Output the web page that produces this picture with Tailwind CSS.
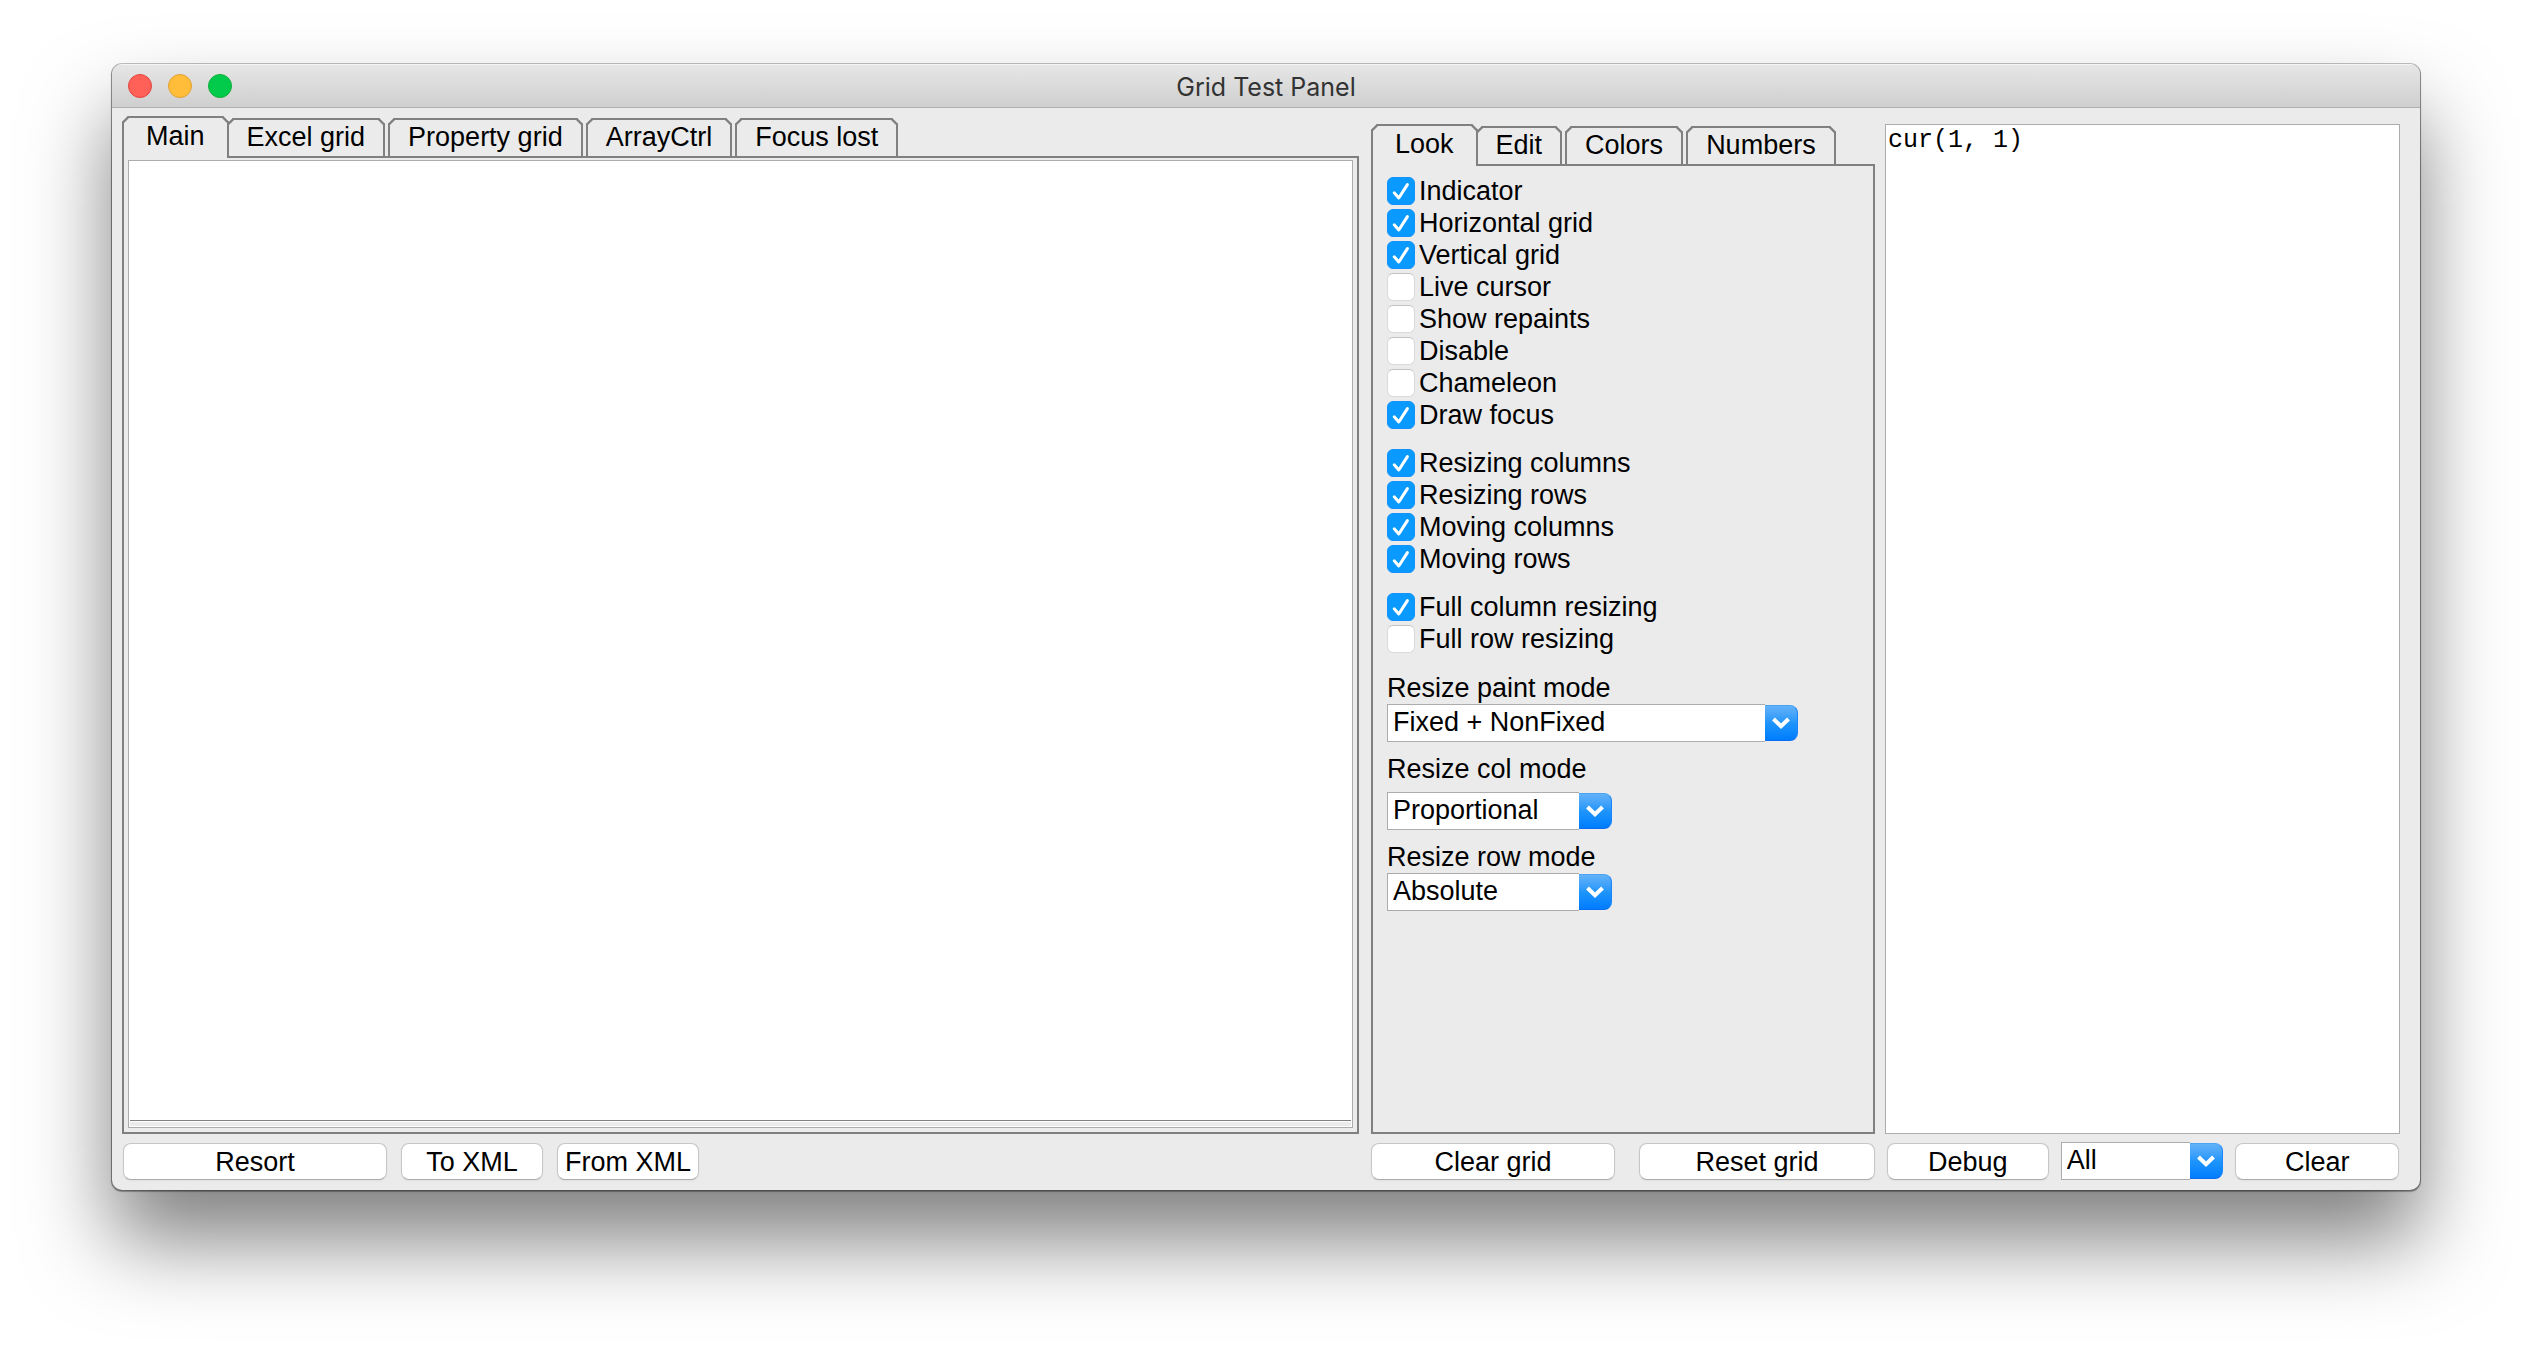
<!DOCTYPE html>
<html lang="en">
<head>
    <meta charset="UTF-8">
    <meta name="viewport" content="width=device-width, initial-scale=1.0">
    <title>Grid Test Panel</title>
    <script src="https://cdn.jsdelivr.net/npm/@tailwindcss/browser@4"></script>
</head>
<body class="flex min-h-screen flex-col bg-white px-28 pt-16 pb-40 font-['Liberation_Sans',Arial,sans-serif] text-[27px] leading-8 text-black">

    <!-- WINDOW -->
    <div class="flex flex-1 flex-col overflow-hidden rounded-[10px] bg-[#ebebeb] shadow-[0_0_0_1px_rgba(0,0,0,0.22),0_1px_1px_1px_rgba(0,0,0,0.3),0_50px_84px_rgba(0,0,0,0.5)]">

        <!-- Title bar -->
        <header class="grid h-11 grid-cols-[1fr_auto_1fr] items-center border-t border-b border-t-[#f4f4f4] border-b-[#b0b0b0] bg-linear-to-b from-[#e6e6e6] to-[#cfcfcf] px-4">
            <div class="flex gap-4">
                <button aria-label="Close" class="size-6 rounded-full border border-[#e2463f] bg-[#ff6058]"></button>
                <button aria-label="Minimize" class="size-6 rounded-full border border-[#e0a032] bg-[#ffbd3a]"></button>
                <button aria-label="Zoom" class="size-6 rounded-full border border-[#0fae3a] bg-[#02ca4a]"></button>
            </div>
            <h1 class="pt-0.5 font-[Inter,sans-serif] text-[25px] text-[#333]">Grid Test Panel</h1>
        </header>

        <main class="flex flex-1 pt-2 pr-5 pb-2.5 pl-2.5">

            <!-- Grid area -->
            <section class="mr-3 flex flex-[1237] flex-col">
                <div role="tablist" class="flex items-start">
                    <button role="tab" aria-selected="true" class="z-10 h-[42px] rounded-t-md border-2 border-b-0 border-[#808080] bg-[#ebebeb] px-[22px] pb-1 [corner-shape:bevel]">Main</button>
                    <div class="-ml-0.5 flex gap-[3px] pt-0.5">
                        <button role="tab" class="h-[38px] rounded-t-md border-2 border-b-0 border-[#808080] px-[18px] pb-0.5 [corner-shape:bevel]">Excel grid</button>
                        <button role="tab" class="h-[38px] rounded-t-md border-2 border-b-0 border-[#808080] px-[18px] pb-0.5 [corner-shape:bevel]">Property grid</button>
                        <button role="tab" class="h-[38px] rounded-t-md border-2 border-b-0 border-[#808080] px-[18px] pb-0.5 [corner-shape:bevel]">ArrayCtrl</button>
                        <button role="tab" class="h-[38px] rounded-t-md border-2 border-b-0 border-[#808080] px-[18px] pb-0.5 [corner-shape:bevel]">Focus lost</button>
                    </div>
                </div>
                <div role="tabpanel" class="-mt-0.5 flex flex-1 flex-col border-2 border-[#808080] px-1 pt-0.5 pb-1">
                    <div class="flex flex-1 flex-col border border-[#acacac] bg-white p-px">
                        <div class="flex-1"></div>
                        <div class="h-px bg-[#808080]"></div>
                        <div class="mt-px h-1 bg-[#ebebeb]"></div>
                    </div>
                </div>
                <div class="mt-2 flex h-[38px] gap-3.5 pl-px">
                    <button class="mt-px w-[264px] rounded-lg border border-[#c6c6c6] border-b-[#acacac] bg-white shadow-xs">Resort</button>
                    <button class="mt-px w-[142px] rounded-lg border border-[#c6c6c6] border-b-[#acacac] bg-white shadow-xs">To XML</button>
                    <button class="mt-px w-[142px] rounded-lg border border-[#c6c6c6] border-b-[#acacac] bg-white shadow-xs">From XML</button>
                </div>
            </section>

            <!-- Options -->
            <section class="mr-2.5 flex flex-[504] flex-col pt-2">
                <div role="tablist" class="flex items-start">
                    <button role="tab" aria-selected="true" class="z-10 h-[42px] rounded-t-md border-2 border-b-0 border-[#808080] bg-[#ebebeb] px-[22px] pb-1 [corner-shape:bevel]">Look</button>
                    <div class="-ml-0.5 flex gap-[3px] pt-0.5">
                        <button role="tab" class="h-[38px] rounded-t-md border-2 border-b-0 border-[#808080] px-[18px] pb-0.5 [corner-shape:bevel]">Edit</button>
                        <button role="tab" class="h-[38px] rounded-t-md border-2 border-b-0 border-[#808080] px-[18px] pb-0.5 [corner-shape:bevel]">Colors</button>
                        <button role="tab" class="h-[38px] rounded-t-md border-2 border-b-0 border-[#808080] px-[18px] pb-0.5 [corner-shape:bevel]">Numbers</button>
                    </div>
                </div>
                <div role="tabpanel" class="-mt-0.5 flex flex-1 flex-col gap-4 border-2 border-[#808080] px-3.5 pt-[9px]">
                    <div id="look-group"></div>
                    <div id="resize-group"></div>
                    <div id="full-group"></div>
                    <div class="flex flex-col gap-2.5">
                        <div>
                            <label for="paintMode" class="block h-[33px] pt-px">Resize paint mode</label>
                            <div class="grid h-[38px] w-[411px]">
                                <span class="col-start-1 row-start-1 mr-[33px] border border-r-0 border-[#acacac] bg-white"></span>
                                <span class="col-start-1 row-start-1 my-px flex w-[33px] items-center justify-center justify-self-end rounded-r-lg border border-l-0 border-t-[#4ba3f5] border-r-[#1a84fb] border-b-[#0a6df0] bg-linear-to-b from-[#62b2f8] via-[#1e95fb] to-[#007cff]">
                                    <svg class="h-3 w-[18px]" viewBox="0 0 18 12" fill="none" stroke="white" stroke-width="4"><path d="M1.5 2 9 9.2 16.5 2"/></svg>
                                </span>
                                <select id="paintMode" class="col-start-1 row-start-1 appearance-none pb-0.5 pl-1.5">
                                    <option>Fixed + NonFixed</option>
                                </select>
                            </div>
                        </div>
                        <div>
                            <label for="colMode" class="mb-[7px] block h-[33px] pt-px">Resize col mode</label>
                            <div class="grid h-[38px] w-[225px]">
                                <span class="col-start-1 row-start-1 mr-[33px] border border-r-0 border-[#acacac] bg-white"></span>
                                <span class="col-start-1 row-start-1 my-px flex w-[33px] items-center justify-center justify-self-end rounded-r-lg border border-l-0 border-t-[#4ba3f5] border-r-[#1a84fb] border-b-[#0a6df0] bg-linear-to-b from-[#62b2f8] via-[#1e95fb] to-[#007cff]">
                                    <svg class="h-3 w-[18px]" viewBox="0 0 18 12" fill="none" stroke="white" stroke-width="4"><path d="M1.5 2 9 9.2 16.5 2"/></svg>
                                </span>
                                <select id="colMode" class="col-start-1 row-start-1 appearance-none pb-0.5 pl-1.5">
                                    <option>Proportional</option>
                                </select>
                            </div>
                        </div>
                        <div>
                            <label for="rowMode" class="block h-[33px] pt-px">Resize row mode</label>
                            <div class="grid h-[38px] w-[225px]">
                                <span class="col-start-1 row-start-1 mr-[33px] border border-r-0 border-[#acacac] bg-white"></span>
                                <span class="col-start-1 row-start-1 my-px flex w-[33px] items-center justify-center justify-self-end rounded-r-lg border border-l-0 border-t-[#4ba3f5] border-r-[#1a84fb] border-b-[#0a6df0] bg-linear-to-b from-[#62b2f8] via-[#1e95fb] to-[#007cff]">
                                    <svg class="h-3 w-[18px]" viewBox="0 0 18 12" fill="none" stroke="white" stroke-width="4"><path d="M1.5 2 9 9.2 16.5 2"/></svg>
                                </span>
                                <select id="rowMode" class="col-start-1 row-start-1 appearance-none pb-0.5 pl-1.5">
                                    <option>Absolute</option>
                                </select>
                            </div>
                        </div>
                    </div>
                </div>
                <div class="mt-2 flex h-[38px] gap-6">
                    <button class="mt-px flex-[243] rounded-lg border border-[#c6c6c6] border-b-[#acacac] bg-white shadow-xs">Clear grid</button>
                    <button class="mt-px flex-[235] rounded-lg border border-[#c6c6c6] border-b-[#acacac] bg-white shadow-xs">Reset grid</button>
                </div>
            </section>

            <!-- Log -->
            <section class="flex flex-[515] flex-col pt-2">
                <textarea aria-label="Log" spellcheck="false" class="flex-1 resize-none border border-[#acacac] bg-white px-0.5 pt-0.5 font-['Liberation_Mono',monospace] text-[25px] leading-7 outline-none">cur(1, 1)</textarea>
                <div class="mt-2 flex h-[38px] gap-3 pr-px pl-0.5">
                    <button class="mt-px flex-[161] rounded-lg border border-[#c6c6c6] border-b-[#acacac] bg-white shadow-xs">Debug</button>
                    <div class="grid flex-[164]">
                        <span class="col-start-1 row-start-1 mr-[33px] border border-r-0 border-[#acacac] bg-white"></span>
                        <span class="col-start-1 row-start-1 my-px flex w-[33px] items-center justify-center justify-self-end rounded-r-lg border border-l-0 border-t-[#4ba3f5] border-r-[#1a84fb] border-b-[#0a6df0] bg-linear-to-b from-[#62b2f8] via-[#1e95fb] to-[#007cff]">
                            <svg class="h-3 w-[18px]" viewBox="0 0 18 12" fill="none" stroke="white" stroke-width="4"><path d="M1.5 2 9 9.2 16.5 2"/></svg>
                        </span>
                        <select aria-label="Log filter" class="col-start-1 row-start-1 appearance-none pb-0.5 pl-1.5">
                            <option>All</option>
                        </select>
                    </div>
                    <button class="mt-px flex-[163] rounded-lg border border-[#c6c6c6] border-b-[#acacac] bg-white shadow-xs">Clear</button>
                </div>
            </section>
        </main>
    </div>

    <script>
        // --- Checkbox groups ---
        const groups = {
            'look-group': [
                ['Indicator', true],
                ['Horizontal grid', true],
                ['Vertical grid', true],
                ['Live cursor', false],
                ['Show repaints', false],
                ['Disable', false],
                ['Chameleon', false],
                ['Draw focus', true]
            ],
            'resize-group': [
                ['Resizing columns', true],
                ['Resizing rows', true],
                ['Moving columns', true],
                ['Moving rows', true]
            ],
            'full-group': [
                ['Full column resizing', true],
                ['Full row resizing', false]
            ]
        };

        for (const [id, options] of Object.entries(groups)) {
            document.getElementById(id).innerHTML = options.map(([text, checked]) => `
                <label class="flex h-8 items-center gap-1">
                    <span class="grid size-7">
                        <input type="checkbox" ${checked ? 'checked' : ''} class="peer col-start-1 row-start-1 size-7 appearance-none rounded-md border border-[#dadada] border-t-[#c2c2c2] bg-white checked:border-[#1492fb] checked:bg-[#0a99ff]">
                        <svg class="pointer-events-none invisible col-start-1 row-start-1 size-7 peer-checked:visible" viewBox="0 0 28 28" fill="none" stroke="white" stroke-width="3" stroke-linecap="round" stroke-linejoin="round"><path d="M7.2 15.8 11.8 21 20.4 7.6"/></svg>
                    </span>
                    <span>${text}</span>
                </label>`).join('');
        }
    </script>
</body>
</html>
